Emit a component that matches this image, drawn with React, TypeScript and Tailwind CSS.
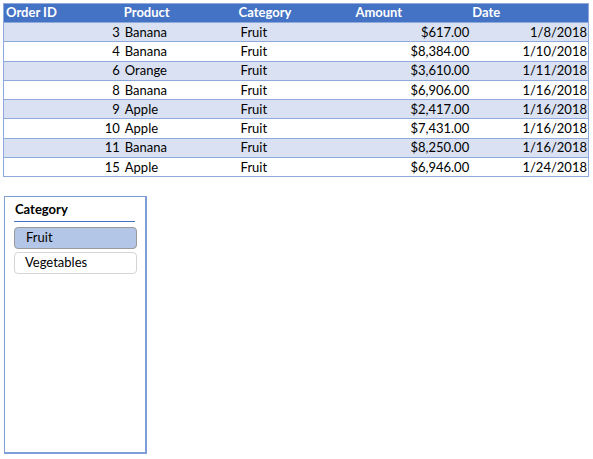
import * as React from 'react';

const rows = [
  { id: 3, product: 'Banana', category: 'Fruit', amount: '$617.00', date: '1/8/2018' },
  { id: 4, product: 'Banana', category: 'Fruit', amount: '$8,384.00', date: '1/10/2018' },
  { id: 6, product: 'Orange', category: 'Fruit', amount: '$3,610.00', date: '1/11/2018' },
  { id: 8, product: 'Banana', category: 'Fruit', amount: '$6,906.00', date: '1/16/2018' },
  { id: 9, product: 'Apple', category: 'Fruit', amount: '$2,417.00', date: '1/16/2018' },
  { id: 10, product: 'Apple', category: 'Fruit', amount: '$7,431.00', date: '1/16/2018' },
  { id: 11, product: 'Banana', category: 'Fruit', amount: '$8,250.00', date: '1/16/2018' },
  { id: 15, product: 'Apple', category: 'Fruit', amount: '$6,946.00', date: '1/24/2018' },
];

export default function App() {
  return (
    <div className="w-[593px] h-[459px] bg-white text-black text-[13px] leading-none font-['Lato','Open_Sans',sans-serif]">
      <div className="pt-[3px] pl-[3px]">
        <div className="w-[586px] border border-[#8eaadb]">
          <div className="grid grid-cols-5 h-[18px] pb-[1px] items-center bg-[#4472c4] font-bold text-white">
            <div className="pl-[2px]">Order ID</div>
            <div className="pl-[3px]">Product</div>
            <div className="pl-[1px]">Category</div>
            <div className="pl-[1px]">Amount</div>
            <div className="pl-[1px]">Date</div>
          </div>
          {rows.map((r, i) => (
            <div
              key={r.id}
              className={
                'grid grid-cols-5 h-[19.3px] items-center border-t border-[#8eaadb] ' +
                (i % 2 === 0 ? 'bg-[#d9e1f2]' : 'bg-white')
              }
            >
              <div className="text-right pr-[1px]">{r.id}</div>
              <div className="pl-[4px]">{r.product}</div>
              <div className="pl-[3px]">{r.category}</div>
              <div className="text-right pr-[2px]">{r.amount}</div>
              <div className="text-right pr-[1px]">{r.date}</div>
            </div>
          ))}
        </div>
      </div>

      <div className="ml-[4px] mt-[19px] w-[143px] h-[258px] border border-r-2 border-b-2 border-[#7f9ed8] px-[9px] pt-[6px]">
        <div className="w-[121px] border-b border-[#4472c4] pb-[5px] pl-[1px] font-bold">
          Category
        </div>
        <div className="mt-[5px] flex flex-col gap-[3px]">
          <div className="w-[123px] h-[22px] pb-[1px] flex items-center pl-[11px] rounded-[4px] border border-[#9a9a9a] bg-[#b4c6e7]">
            Fruit
          </div>
          <div className="w-[123px] h-[22px] pb-[1px] flex items-center pl-[10px] rounded-[4px] border border-[#d4d4d4] bg-white">
            Vegetables
          </div>
        </div>
      </div>
    </div>
  );
}
